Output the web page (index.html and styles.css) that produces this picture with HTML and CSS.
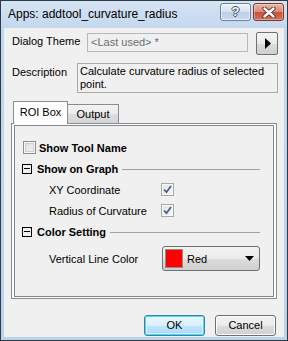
FILE: index.html
```html
<!DOCTYPE html>
<html>
<head>
<meta charset="utf-8">
<link rel="stylesheet" href="styles.css">
</head>
<body>
<div class="window">
  <div class="titlebar">
    <span class="title">Apps: addtool_curvature_radius</span>
    <div class="caption-btns">
      <div class="cbtn help"><span class="help-glyph">?</span></div>
      <div class="cbtn close">
        <svg width="14" height="11" viewBox="0 0 14 11">
          <path d="M2.5 1.5 L11.5 9.5 M11.5 1.5 L2.5 9.5" stroke="#5a2a22" stroke-width="4.2" stroke-linecap="round" fill="none"/>
          <path d="M2.5 1.5 L11.5 9.5 M11.5 1.5 L2.5 9.5" stroke="#ffffff" stroke-width="2.4" stroke-linecap="round" fill="none"/>
        </svg>
      </div>
    </div>
  </div>
  <div class="client">
    <div class="theme-row">
      <span class="lbl theme-lbl">Dialog Theme</span>
      <div class="theme-input">&lt;Last used&gt; *</div>
      <div class="arrow-btn">
        <svg width="6" height="11" viewBox="0 0 6 11"><path d="M0 0 L6 5.5 L0 11 Z" fill="#000"/></svg>
      </div>
    </div>
    <div class="desc-row">
      <span class="lbl desc-lbl">Description</span>
      <div class="desc-box">Calculate curvature radius of selected point.</div>
    </div>
    <div class="tabs">
      <div class="tab active">ROI Box</div>
      <div class="tab">Output</div>
    </div>
    <div class="panel">
      <div class="tree">
        <div class="trow">
          <span class="chk"></span>
          <span class="bold-lbl chk-lbl">Show Tool Name</span>
        </div>
        <div class="trow">
          <span class="expander"><span class="minus"></span></span>
          <span class="bold-lbl grp-lbl">Show on Graph</span>
          <span class="sep"></span>
        </div>
        <div class="trow">
          <span class="item-lbl">XY Coordinate</span>
          <span class="chk checked">
            <svg width="9" height="9" viewBox="0 0 9 9"><path d="M1 4.5 L3.5 7.2 L8 1" stroke="#4b5f8e" stroke-width="1.8" fill="none"/></svg>
          </span>
        </div>
        <div class="trow">
          <span class="item-lbl">Radius of Curvature</span>
          <span class="chk checked">
            <svg width="9" height="9" viewBox="0 0 9 9"><path d="M1 4.5 L3.5 7.2 L8 1" stroke="#4b5f8e" stroke-width="1.8" fill="none"/></svg>
          </span>
        </div>
        <div class="trow">
          <span class="expander"><span class="minus"></span></span>
          <span class="bold-lbl grp-lbl">Color Setting</span>
          <span class="sep"></span>
        </div>
        <div class="trow color-row">
          <span class="item-lbl">Vertical Line Color</span>
          <div class="color-combo">
            <span class="swatch"></span>
            <span class="color-name">Red</span>
            <svg class="drop" width="9" height="5" viewBox="0 0 9 5"><path d="M0 0 L9 0 L4.5 5 Z" fill="#000"/></svg>
          </div>
        </div>
      </div>
    </div>
    <div class="buttons">
      <div class="btn default">OK</div>
      <div class="btn">Cancel</div>
    </div>
  </div>
</div>
</body>
</html>
```

FILE: styles.css
```css
html, body {
  margin: 0;
  padding: 0;
  background: #ffffff;
}

.window {
  box-sizing: border-box;
  width: 288px;
  height: 341px;
  border: 1px solid #2e3a46;
  background: linear-gradient(#d6e4f4, #c2d6ed 30px, #bcd2ea);
  padding: 0 3px 3px 3px;
  display: flex;
  flex-direction: column;
}

.titlebar {
  height: 27px;
  display: flex;
  align-items: flex-start;
  padding-left: 4px;
}

.title {
  font: 12px "Liberation Sans", Arial, sans-serif;
  color: #000;
  margin-top: 6px;
  flex: 1;
  white-space: nowrap;
}

.caption-btns {
  display: flex;
  margin-top: 2px;
}

.cbtn {
  box-sizing: border-box;
  width: 31px;
  height: 18px;
  border-radius: 3px;
  display: flex;
  align-items: center;
  justify-content: center;
}

.help {
  margin-right: 2px;
  border: 1px solid #6c7f9c;
  background: linear-gradient(#eef3fa, #d4e1f1 50%, #bccfe8 51%, #c9d9ee);
  box-shadow: inset 0 0 0 1px rgba(255,255,255,0.6);
}

.help-glyph {
  font: bold 13px "Liberation Sans", Arial, sans-serif;
  color: #ffffff;
  text-shadow: 1px 0 0 #3d4d66, -1px 0 0 #3d4d66, 0 1px 0 #3d4d66, 0 -1px 0 #3d4d66;
  line-height: 14px;
}

.close {
  border: 1px solid #7a3a30;
  background: linear-gradient(#eab4a6, #d98a78 50%, #c7503c 51%, #d4705c);
  box-shadow: inset 0 0 0 1px rgba(255,255,255,0.35);
}

.client {
  height: 309px;
  background: #f0f0f0;
  font: 11px "Liberation Sans", Arial, sans-serif;
  color: #000;
}

.lbl {
  box-sizing: border-box;
  padding-left: 8px;
  flex: none;
  white-space: nowrap;
}

.theme-row {
  display: flex;
  align-items: flex-start;
  margin-top: 4px;
  height: 23px;
}

.theme-lbl {
  width: 83px;
  margin-top: 3px;
}

.theme-input {
  box-sizing: border-box;
  width: 161px;
  height: 19px;
  margin-top: 1px;
  border: 1px solid #b5b9bd;
  background: #f0f0f0;
  color: #6d6d6d;
  padding-left: 3px;
  line-height: 17px;
}

.arrow-btn {
  box-sizing: border-box;
  width: 22px;
  height: 23px;
  margin-left: 8px;
  border: 1px solid #707070;
  border-radius: 2px;
  background: linear-gradient(#f2f2f2, #ebebeb 50%, #dddddd 51%, #cfcfcf);
  display: flex;
  align-items: center;
  justify-content: center;
  padding-left: 1px;
}

.desc-row {
  display: flex;
  align-items: flex-start;
  margin-top: 8px;
}

.desc-lbl {
  width: 73px;
  padding-top: 3px;
}

.desc-box {
  box-sizing: border-box;
  width: 201px;
  height: 30px;
  border: 1px solid #a8a8a8;
  padding: 1px 2px;
  line-height: 13px;
}

.tabs {
  display: flex;
  align-items: flex-end;
  margin-top: 8px;
  margin-left: 9px;
  height: 22px;
  position: relative;
  z-index: 1;
}

.tab {
  box-sizing: border-box;
  height: 19px;
  width: 51px;
  border: 1px solid #898c95;
  border-bottom: none;
  border-left: none;
  background: linear-gradient(#f3f3f3, #ebebeb 50%, #dddddd 51%, #d6d6d6);
  text-align: center;
  line-height: 18px;
  font-size: 11px;
}

.tab.active {
  width: 55px;
  height: 23px;
  margin-bottom: -1px;
  border-left: 1px solid #898c95;
  background: #ffffff;
  line-height: 20px;
}

.panel {
  box-sizing: border-box;
  margin-left: 7px;
  width: 266px;
  height: 176px;
  border: 1px solid #898c95;
  background: #ffffff;
  padding: 1px 2px;
}

.tree {
  box-sizing: border-box;
  height: 100%;
  border: 1px solid #828790;
  background: #f0f0f0;
  padding: 11px 13px 0 7px;
}

.trow {
  display: flex;
  align-items: center;
  height: 21px;
}

.chk {
  box-sizing: border-box;
  width: 13px;
  height: 13px;
  border: 1px solid #8e8f8f;
  background: linear-gradient(135deg, #dcdcdc, #f4f4f4);
  box-shadow: inset 0 0 0 1px #f6f6f6, inset 0 0 0 2px #cfcfcf;
  display: flex;
  align-items: center;
  justify-content: center;
  flex: none;
}

.trow > .chk:first-child {
  margin-left: 1px;
}

.chk.checked {
  border-color: #a8a8a8;
  background: linear-gradient(135deg, #e4e4e4, #f6f6f6);
  box-shadow: inset 0 0 0 1px #f8f8f8;
}

.bold-lbl {
  font-weight: bold;
  white-space: nowrap;
}

.chk-lbl {
  margin-left: 3px;
}

.expander {
  box-sizing: border-box;
  width: 10px;
  height: 10px;
  border: 1px solid #000;
  display: flex;
  align-items: center;
  justify-content: center;
  flex: none;
}

.minus {
  width: 6px;
  height: 1px;
  background: #000;
}

.grp-lbl {
  margin-left: 5px;
}

.sep {
  flex: 1;
  height: 1px;
  background: #a0a0a0;
  margin-left: 4px;
  margin-top: 1px;
}

.item-lbl {
  width: 112px;
  margin-left: 27px;
  white-space: nowrap;
  flex: none;
}

.color-row {
  height: 25px;
  margin-top: 4px;
}

.color-combo {
  box-sizing: border-box;
  width: 98px;
  height: 25px;
  margin-left: 1px;
  border: 1px solid #707070;
  border-radius: 3px;
  background: linear-gradient(#f2f2f2, #ebebeb 50%, #dddddd 51%, #cfcfcf);
  display: flex;
  align-items: center;
  padding-left: 2px;
}

.swatch {
  box-sizing: border-box;
  width: 18px;
  height: 19px;
  border: 1px solid #8c8c8c;
  background: #ff0000;
  box-shadow: inset 0 0 0 1px #ff0000;
  flex: none;
}

.color-name {
  margin-left: 4px;
  flex: 1;
}

.drop {
  margin-right: 5px;
}

.buttons {
  display: flex;
  justify-content: flex-end;
  gap: 10px;
  margin-top: 16px;
  margin-right: 8px;
}

.btn {
  box-sizing: border-box;
  width: 61px;
  height: 21px;
  border: 1px solid #707070;
  border-radius: 3px;
  background: linear-gradient(#f2f2f2, #ebebeb 50%, #dddddd 51%, #cfcfcf);
  box-shadow: inset 0 0 0 1px #fbfbfb;
  text-align: center;
  line-height: 19px;
}

.btn.default {
  border-color: #3c7fb1;
  box-shadow: inset 0 0 0 1px #48d8f8, inset 0 0 0 2px rgba(255,255,255,0.5);
  background: linear-gradient(#eaf6fd, #d9f0fc 50%, #bee6fd 51%, #a7d9f5);
}
```
